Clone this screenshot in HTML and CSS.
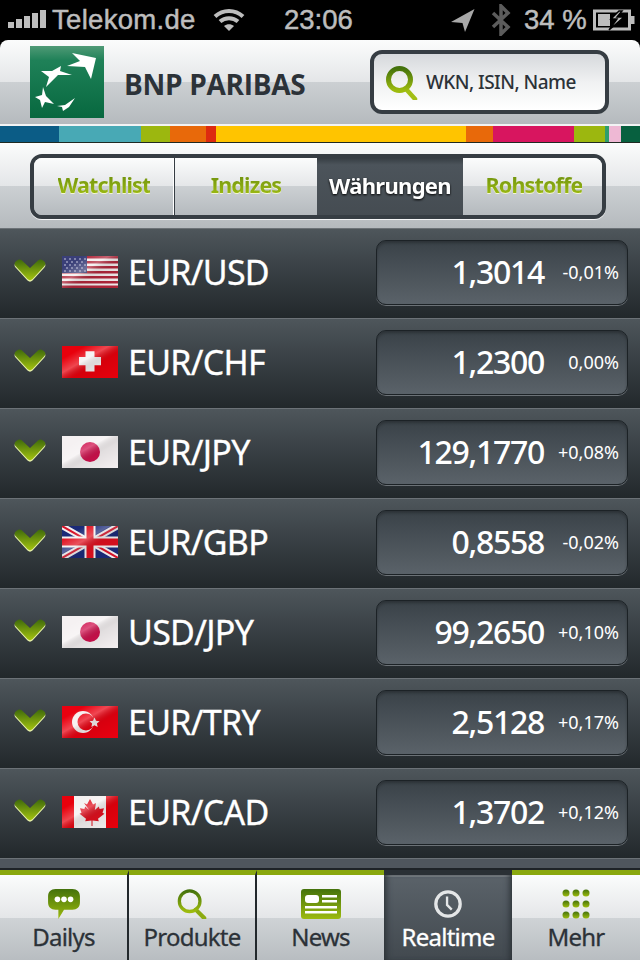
FILE: index.html
```html
<!DOCTYPE html>
<html lang="de">
<head>
    <meta charset="UTF-8">
    <meta name="viewport" content="width=device-width, initial-scale=1.0">
    <title>BNP Paribas Realtime</title>
    <link rel="stylesheet" href="styles.css">
</head>
<body>
<svg class="defs" width="0" height="0">
    <defs>
        <linearGradient id="chevFill" x1="0" y1="0" x2="0" y2="1">
            <stop offset="0" stop-color="#3f6a0c"/>
            <stop offset="1" stop-color="#a4c40f"/>
        </linearGradient>
        <linearGradient id="iconFill" x1="0" y1="0" x2="0" y2="1">
            <stop offset="0" stop-color="#44720c"/>
            <stop offset="1" stop-color="#9dbb0e"/>
        </linearGradient>
        <linearGradient id="logoFill" x1="0" y1="0" x2="0" y2="1">
            <stop offset="0" stop-color="#4f9a76"/>
            <stop offset="0.2" stop-color="#1f8158"/>
            <stop offset="1" stop-color="#07683f"/>
        </linearGradient>
        <linearGradient id="shine" x1="0" y1="0" x2="1" y2="1">
            <stop offset="0.2" stop-color="#fff" stop-opacity="0"/>
            <stop offset="0.42" stop-color="#fff" stop-opacity="0.28"/>
            <stop offset="0.6" stop-color="#000" stop-opacity="0.08"/>
            <stop offset="1" stop-color="#000" stop-opacity="0"/>
        </linearGradient>
        <symbol id="chevron" viewBox="0 0 32 23">
            <path d="M3 1.500C5 0 7 .5 8.500 2L16 9l7.500-7C25 .5 27 0 29 1.500 32 3.500 32 5.500 30 7.500L18.500 20c-1.500 1.500-3.500 1.500-5 0L2 7.500C0 5.500 0 3.500 3 1.500Z" fill="#e6f0a8" transform="translate(0 1.500)"/>
            <path d="M3 1.500C5 0 7 .5 8.500 2L16 9l7.500-7C25 .5 27 0 29 1.500 32 3.500 32 5.500 30 7.500L18.500 20c-1.500 1.500-3.500 1.500-5 0L2 7.500C0 5.500 0 3.500 3 1.500Z" fill="url(#chevFill)"/>
        </symbol>
        <symbol id="usa" viewBox="0 0 56 32">
            <rect width="56" height="32" fill="#f3eeee"/>
            <path d="M0 0h56v2.500H0zM0 5h56v2.500H0zM0 10h56v2.500H0zM0 15h56v2.500H0zM0 20h56v2.500H0zM0 25h56v2.500H0zM0 29.500h56V32H0z" fill="#b0263a"/>
            <rect width="25" height="17" fill="#3a3f78"/>
            <g fill="#d8d8ea">
                <circle cx="3" cy="3" r=".8"/><circle cx="8" cy="3" r=".8"/><circle cx="13" cy="3" r=".8"/><circle cx="18" cy="3" r=".8"/><circle cx="23" cy="3" r=".8"/>
                <circle cx="5" cy="6" r=".8"/><circle cx="10" cy="6" r=".8"/><circle cx="15" cy="6" r=".8"/><circle cx="20" cy="6" r=".8"/>
                <circle cx="3" cy="9" r=".8"/><circle cx="8" cy="9" r=".8"/><circle cx="13" cy="9" r=".8"/><circle cx="18" cy="9" r=".8"/><circle cx="23" cy="9" r=".8"/>
                <circle cx="5" cy="12" r=".8"/><circle cx="10" cy="12" r=".8"/><circle cx="15" cy="12" r=".8"/><circle cx="20" cy="12" r=".8"/>
                <circle cx="3" cy="15" r=".8"/><circle cx="8" cy="15" r=".8"/><circle cx="13" cy="15" r=".8"/><circle cx="18" cy="15" r=".8"/><circle cx="23" cy="15" r=".8"/>
            </g>
            <rect width="56" height="32" fill="url(#shine)"/>
        </symbol>
        <symbol id="che" viewBox="0 0 56 32">
            <rect width="56" height="32" fill="#e8000c"/>
            <path d="M23.500 6h9v6H39v8.500h-6.500V27h-9v-6.500H17V12h6.500z" fill="#f4f0f0" transform="translate(0 -.5) scale(1 .96)"/>
            <rect width="56" height="32" fill="url(#shine)"/>
        </symbol>
        <symbol id="jpn" viewBox="0 0 56 32">
            <rect width="56" height="32" fill="#f5f1f2"/>
            <circle cx="28" cy="16" r="10" fill="#d0114e"/>
            <rect width="56" height="32" fill="url(#shine)"/>
        </symbol>
        <symbol id="gbr" viewBox="0 0 56 32">
            <rect width="56" height="32" fill="#1b2a78"/>
            <path d="M0 0 56 32M56 0 0 32" stroke="#f3f0f0" stroke-width="6"/>
            <path d="M0 0 56 32M56 0 0 32" stroke="#d8142a" stroke-width="2"/>
            <path d="M28 0v32M0 16h56" stroke="#f3f0f0" stroke-width="11"/>
            <path d="M28 0v32M0 16h56" stroke="#e0101f" stroke-width="7"/>
            <rect width="56" height="32" fill="url(#shine)"/>
        </symbol>
        <symbol id="tur" viewBox="0 0 56 32">
            <rect width="56" height="32" fill="#ea0010"/>
            <circle cx="21" cy="16" r="11" fill="#f6eeee"/>
            <circle cx="24" cy="16" r="8.500" fill="#ea0010"/>
            <path d="m32.500 11.500 1.500 3.300 3.600.4-2.700 2.400.8 3.500-3.200-1.800-3.100 1.800.7-3.500-2.600-2.400 3.500-.4z" fill="#f6eeee"/>
            <rect width="56" height="32" fill="url(#shine)"/>
        </symbol>
        <symbol id="can" viewBox="0 0 56 32">
            <rect width="56" height="32" fill="#f4f0f0"/>
            <rect width="12" height="32" fill="#e8000c"/>
            <rect x="44" width="12" height="32" fill="#e8000c"/>
            <path d="m28 3 3 5.500 3-1.500-1.200 7 4-3.500.8 2.500 4.400-.7-1.500 4.500 1.900 1-6.400 5 .8 2.500-6.300-.8V30h-1V24.500l-6.300.8.800-2.500-6.400-5 1.900-1-1.500-4.500 4.400.7.800-2.500 4 3.500L22 7l3 1.500z" fill="#e0101f"/>
            <rect width="56" height="32" fill="url(#shine)"/>
        </symbol>
    </defs>
</svg>

<div class="phone">
    <div class="status">
        <svg class="bars" width="38" height="20" viewBox="0 0 38 20">
            <rect x="0" y="12" width="6" height="6"/><rect x="8" y="9" width="6" height="9"/><rect x="16" y="6" width="6" height="12"/><rect x="24" y="3" width="6" height="15"/><rect x="32" y="0" width="6" height="18"/>
        </svg>
        <span class="carrier">Telekom.de</span>
        <svg class="wifi" width="32" height="24" viewBox="0 0 32 24" fill="none" stroke="#bdbdbd" stroke-width="4">
            <path d="M2 8.500C10 1 22 1 30 8.500"/>
            <path d="M7 13.500C12 9 20 9 25 13.500"/>
            <path d="M16 23l-5-5c3-2.500 7-2.500 10 0z" fill="#bdbdbd" stroke="none"/>
        </svg>
        <span class="clock">23:06</span>
        <svg class="arrow" width="24" height="24" viewBox="0 0 24 24"><path d="M23.500 1 0 14l11.500 1L14 24z" fill="#a8a8a8"/></svg>
        <svg class="bt" width="20" height="32" viewBox="0 0 20 32" fill="none" stroke="#5c5c5c" stroke-width="3.500"><path d="M2 9l15 14-7 7V2l7 7L2 23"/></svg>
        <span class="pct">34 %</span>
        <svg class="batt" width="42" height="24" viewBox="0 0 42 24">
            <path d="M1.500 3h35v18h-35z" fill="none" stroke="#bdbdbd" stroke-width="3"/>
            <rect x="38" y="8" width="3.500" height="8" fill="#bdbdbd"/>
            <path d="M5 6h12v12H5z" fill="#bdbdbd"/>
            <path d="M26 3l-8 8h6l-8 11 15-13h-7l5-6z" fill="#bdbdbd" stroke="#000" stroke-width="1.500"/>
        </svg>
    </div>

    <header class="brand">
        <svg class="logo" width="74" height="72" viewBox="0 0 74 72">
            <rect width="74" height="72" fill="url(#logoFill)"/>
            <g fill="#fff">
                <path d="M42 7 66 12 61 33 55 21 37 20 50 15z"/>
                <path d="M11 25 22 25 31 20 30 25 42 29 28 29 16 41 19 31z"/>
                <path d="M13 41 16 50 24 58 15 56 12 62 10 54 5 51 12 49z"/>
                <path d="M27 60 35 59 45 52 39 61 33 65 32 61z"/>
            </g>
        </svg>
        <div class="brand-name">BNP PARIBAS</div>
        <div class="search">
            <svg width="36" height="36" viewBox="0 0 36 36" fill="none">
                <path d="M22 25l9 10" stroke="#a3bf16" stroke-width="4.500" stroke-linecap="round"/>
                <circle cx="15.500" cy="15.500" r="11" stroke="url(#iconFill)" stroke-width="5"/>
            </svg>
            <span>WKN, ISIN, Name</span>
        </div>
    </header>

    <div class="rainbow">
        <i class="c-blue"></i><i class="c-teal"></i><i class="c-lime"></i><i class="c-orange"></i><i class="c-red"></i><i class="c-yellow"></i><i class="c-orange"></i><i class="c-pink"></i><i class="c-lime"></i><i class="c-green"></i><i class="c-rose"></i><i class="c-dark"></i>
    </div>

    <div class="tabs-wrap">
        <nav class="tabs">
            <a class="tab tab-1"><span>Watchlist</span></a>
            <a class="tab tab-2"><span>Indizes</span></a>
            <a class="tab tab-3 active"><span>Währungen</span></a>
            <a class="tab tab-4"><span>Rohstoffe</span></a>
        </nav>
    </div>

    <main class="list">
        <div class="row">
            <svg class="chev"><use href="#chevron"/></svg>
            <svg class="flag"><use href="#usa"/></svg>
            <span class="pair">EUR/USD</span>
            <div class="quote"><span class="price">1,3014</span><span class="change">-0,01%</span></div>
        </div>
        <div class="row">
            <svg class="chev"><use href="#chevron"/></svg>
            <svg class="flag"><use href="#che"/></svg>
            <span class="pair">EUR/CHF</span>
            <div class="quote"><span class="price">1,2300</span><span class="change">0,00%</span></div>
        </div>
        <div class="row">
            <svg class="chev"><use href="#chevron"/></svg>
            <svg class="flag"><use href="#jpn"/></svg>
            <span class="pair">EUR/JPY</span>
            <div class="quote"><span class="price">129,1770</span><span class="change">+0,08%</span></div>
        </div>
        <div class="row">
            <svg class="chev"><use href="#chevron"/></svg>
            <svg class="flag"><use href="#gbr"/></svg>
            <span class="pair">EUR/GBP</span>
            <div class="quote"><span class="price">0,8558</span><span class="change">-0,02%</span></div>
        </div>
        <div class="row">
            <svg class="chev"><use href="#chevron"/></svg>
            <svg class="flag"><use href="#jpn"/></svg>
            <span class="pair">USD/JPY</span>
            <div class="quote"><span class="price">99,2650</span><span class="change">+0,10%</span></div>
        </div>
        <div class="row">
            <svg class="chev"><use href="#chevron"/></svg>
            <svg class="flag"><use href="#tur"/></svg>
            <span class="pair">EUR/TRY</span>
            <div class="quote"><span class="price">2,5128</span><span class="change">+0,17%</span></div>
        </div>
        <div class="row">
            <svg class="chev"><use href="#chevron"/></svg>
            <svg class="flag"><use href="#can"/></svg>
            <span class="pair">EUR/CAD</span>
            <div class="quote"><span class="price">1,3702</span><span class="change">+0,12%</span></div>
        </div>
        <div class="row-rest"></div>
    </main>

    <footer class="tabbar">
        <a class="item">
            <svg width="34" height="30" viewBox="0 0 34 32">
                <path d="M8 0h18c5 0 8 3 8 8v6c0 5-3 8-8 8H17l-6 10v-10H8c-5 0-8-3-8-8V8c0-5 3-8 8-8z" fill="url(#iconFill)"/>
                <circle cx="10" cy="11" r="3" fill="#fff"/><circle cx="17" cy="11" r="3" fill="#fff"/><circle cx="24" cy="11" r="3" fill="#fff"/>
            </svg>
            <span>Dailys</span>
        </a>
        <a class="item">
            <svg width="30" height="30" viewBox="0 0 32 32" fill="none">
                <path d="M20 22l9 9" stroke="#8cab12" stroke-width="4.500" stroke-linecap="round"/>
                <circle cx="13.500" cy="13" r="11" stroke="url(#iconFill)" stroke-width="3.500"/>
            </svg>
            <span>Produkte</span>
        </a>
        <a class="item">
            <svg width="40" height="30" viewBox="0 0 40 30">
                <rect width="40" height="30" rx="3" fill="url(#iconFill)"/>
                <rect x="4" y="6" width="14" height="8" rx="3" fill="#fff"/>
                <path d="M21 6h15v2.500H21zM21 11h15v2.500H21zM4 17h32v2.500H4zM4 22h32v2.500H4z" fill="#fff"/>
            </svg>
            <span>News</span>
        </a>
        <a class="item active">
            <svg width="30" height="30" viewBox="0 0 32 32" fill="none" stroke="#e4e6e7">
                <circle cx="16" cy="16" r="13" stroke-width="3.500"/>
                <path d="M15 8v9l5 5" stroke-width="2.500"/>
            </svg>
            <span>Realtime</span>
        </a>
        <a class="item">
            <svg width="28" height="30" viewBox="0 0 28 30" fill="url(#iconFill)">
                <circle cx="4" cy="4" r="3.500"/><circle cx="14" cy="4" r="3.500"/><circle cx="24" cy="4" r="3.500"/>
                <circle cx="4" cy="15" r="3.500"/><circle cx="14" cy="15" r="3.500"/><circle cx="24" cy="15" r="3.500"/>
                <circle cx="4" cy="26" r="3.500"/><circle cx="14" cy="26" r="3.500"/><circle cx="24" cy="26" r="3.500"/>
            </svg>
            <span>Mehr</span>
        </a>
    </footer>
</div>
</body>
</html>
```

FILE: styles.css
```css
html, body {
    margin: 0;
    padding: 0;
    background: #000;
}
body {
    font-family: "Noto Sans", "Open Sans", Arial, sans-serif;
}
.defs {
    display: block;
    height: 0;
}
.phone {
    width: 640px;
    height: 960px;
    overflow: hidden;
    display: flex;
    flex-direction: column;
}

/* status bar */
.status {
    height: 40px;
    flex: none;
    display: flex;
    align-items: center;
    background: #000;
    color: #bdbdbd;
    font-family: "Liberation Sans", Arial, sans-serif;
    font-size: 27.5px;
    -webkit-text-stroke: 0.5px #bdbdbd;
    line-height: 40px;
}
.bars {
    margin-left: 8px;
    fill: #bdbdbd;
}
.carrier {
    margin-left: 6px;
    width: 144px;
    letter-spacing: 0.3px;
}
.wifi {
    margin-left: 17px;
}
.clock {
    margin-left: 39px;
    width: 72px;
}
.arrow {
    margin-left: 95px;
}
.bt {
    margin-left: 16px;
}
.pct {
    margin-left: 13px;
    width: 66px;
}
.batt {
    margin-left: 3px;
}

/* brand header */
.brand {
    height: 84px;
    flex: none;
    display: flex;
    align-items: center;
    border-radius: 8px 8px 0 0;
    background: linear-gradient(#fbfcfc 0, #e4e6e8 50%, #ccd0d3 50%, #b5babe 100%);
}
.logo {
    margin-left: 30px;
    flex: none;
}
.brand-name {
    margin-left: 20px;
    width: 246px;
    font-family: "Open Sans", Arial, sans-serif;
    font-size: 28px;
    font-weight: 700;
    letter-spacing: -0.3px;
    color: #2c3238;
    margin-top: 3px;
}
.search {
    box-sizing: border-box;
    width: 239px;
    height: 64px;
    display: flex;
    align-items: center;
    padding-left: 10px;
    border: 4px solid #363d43;
    border-radius: 12px;
    background: linear-gradient(#d6d9dc, #f0f1f2 50%, #ffffff);
    font-size: 19px;
    font-weight: 500;
    letter-spacing: -0.55px;
    color: #2c3238;
}
.search span {
    margin-left: 6px;
}

/* colour strip */
.rainbow {
    flex: none;
    height: 19px;
    display: grid;
    grid-template-columns: 59px 82px 29px 36px 10px 250px 27px 81px 31px 4px 12px 19px;
    border-top: 2px solid #f2f3f4;
    border-bottom: 1px solid #1f2a22;
    box-sizing: border-box;
}
.rainbow i {
    display: block;
}
.c-blue { background: #0b5c86; }
.c-teal { background: #48a9b5; }
.c-lime { background: #9cb70f; }
.c-orange { background: #e8690a; }
.c-red { background: #dd2a10; }
.c-yellow { background: #ffc400; }
.c-pink { background: #d8155f; }
.c-green { background: #2f9e6c; }
.c-rose { background: #eeb8d4; }
.c-dark { background: #07603f; }

/* segment tabs */
.tabs-wrap {
    height: 85px;
    flex: none;
    box-sizing: border-box;
    padding: 11px 34px 0 30px;
    background: linear-gradient(#fbfcfc 0, #e4e6e8 50%, #ccd0d3 50%, #b5babe 100%);
}
.tabs {
    box-sizing: border-box;
    height: 65px;
    display: grid;
    grid-template-columns: 141px 142px 146px 1fr;
    border: 4px solid #363d43;
    border-radius: 12px;
    overflow: hidden;
    box-shadow: 0 1px 0 #f4f5f6;
}
.tab {
    display: flex;
    align-items: center;
    justify-content: center;
    padding-bottom: 4px;
    font-size: 21.5px;
    font-weight: 700;
    letter-spacing: -0.85px;
    background: linear-gradient(#fbfcfc 0, #e4e6e8 50%, #ccd0d3 50%, #b5babe 100%);
}
.tab span {
    color: transparent;
    background: linear-gradient(#64880f, #a6c312);
    -webkit-background-clip: text;
    background-clip: text;
    filter: drop-shadow(0 1px 0 #f2f6d0);
}
.tab-4 span {
    margin-left: 3px;
}
.tab-1 {
    border-right: 1px solid #363d43;
    box-shadow: inset -1px 0 0 #fff;
}
.tab.active {
    font-size: 22px;
    letter-spacing: -0.7px;
    background: linear-gradient(#363d43 0, #4c545b 12%, #454c52 100%);
}
.tab.active span {
    color: #fff;
    background: none;
    filter: drop-shadow(0 1px 1px #000);
}

/* quote list */
.list {
    flex: 1;
    display: flex;
    flex-direction: column;
    overflow: hidden;
    background: #4f565d;
}
.row {
    height: 90px;
    flex: none;
    box-sizing: border-box;
    display: flex;
    align-items: flex-start;
    position: relative;
    border-top: 1px solid #6c7277;
    background: linear-gradient(#4e565b, #394045 45%, #22282b 100%);
}
.row-rest {
    height: 10px;
    flex: none;
    border-top: 1px solid #6c7277;
    background: #4f565d;
}
.chev {
    flex: none;
    width: 32px;
    height: 23px;
    margin: 30px 0 0 14px;
}
.flag {
    flex: none;
    width: 56px;
    height: 32px;
    margin: 27px 0 0 16px;
}
.pair {
    flex: none;
    width: 248px;
    margin: 0 0 0 10px;
    font-size: 34px;
    letter-spacing: -0.7px;
    -webkit-text-stroke: 0.3px #fff;
    line-height: 87px;
    color: #fff;
}
.quote {
    flex: none;
    box-sizing: border-box;
    width: 252px;
    height: 65px;
    margin-top: 11px;
    display: flex;
    align-items: center;
    justify-content: flex-end;
    padding-right: 8px;
    border: 1px solid #1c2226;
    border-radius: 10px;
    background: linear-gradient(#3a4248, #5a6269);
    box-shadow: 0 1px 0 #6b7176, inset 0 2px 3px rgba(0, 0, 0, 0.25);
    color: #fff;
}
.price {
    font-size: 32px;
    font-weight: 500;
    letter-spacing: -1.3px;
    margin-bottom: 2px;
}
.change {
    width: 75px;
    text-align: right;
    font-size: 18px;
    margin-bottom: 2px;
}

/* bottom tab bar */
.tabbar {
    height: 92px;
    flex: none;
    display: grid;
    grid-template-columns: 129px 128px 127px 128px 128px;
    background: #1e2327;
    padding-top: 2px;
    box-sizing: border-box;
}
.item {
    display: flex;
    flex-direction: column;
    align-items: center;
    border-top: 5px solid #8aa80f;
    border-right: 2px solid #22282c;
    padding-top: 14px;
    height: 90px;
    box-sizing: border-box;
    background: linear-gradient(#fbfcfc 0, #e4e6e8 43px, #cfd3d6 43px, #b8bdc1 100%);
    background-origin: padding-box;
    font-size: 24px;
    letter-spacing: -0.75px;
    -webkit-text-stroke: 0.3px currentColor;
    color: #2c3238;
}
.item svg {
    height: 30px;
    flex: none;
}
.item span {
    line-height: 34px;
    margin-top: 1px;
}
.item.active {
    border-top: 5px solid #2a3035;
    border-right: none;
    background: linear-gradient(#767c81 0, #767c81 2px, #5a6269 2px, #42494f 100%);
    box-shadow: inset 6px 0 6px -4px #2a3035, inset -6px 0 6px -4px #2a3035;
    color: #fff;
}
.item:nth-child(3) {
    border-right: none;
}
.item:last-child {
    border-right: none;
}
```
